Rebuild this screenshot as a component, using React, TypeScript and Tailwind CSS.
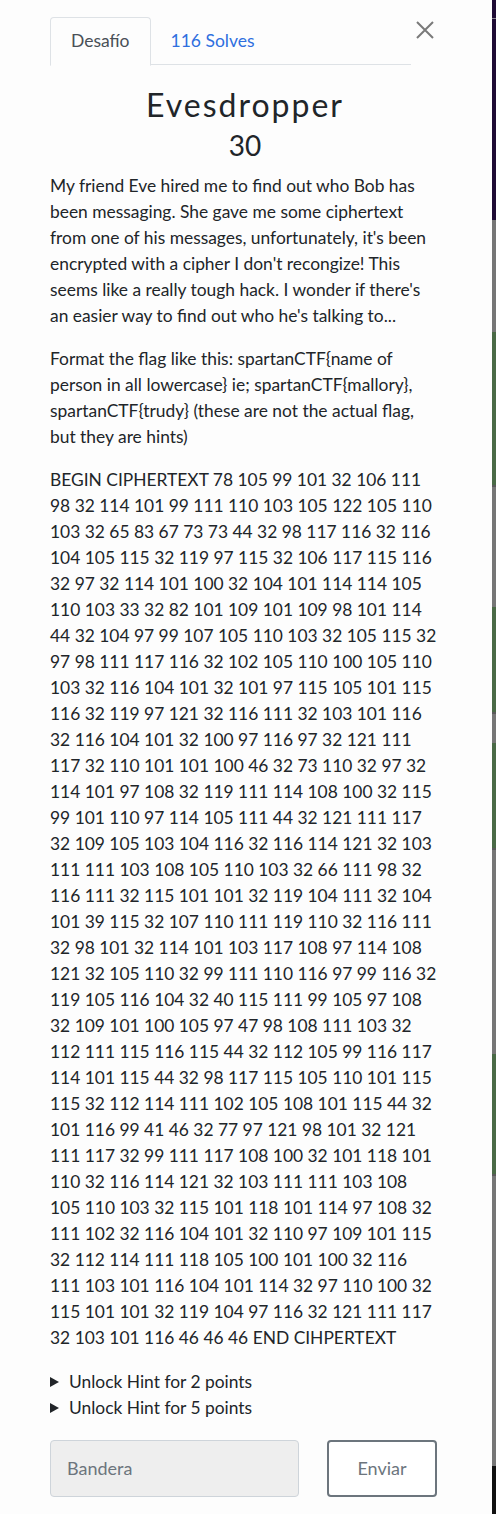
import React from "react";

const CIPHER =
  "BEGIN CIPHERTEXT 78 105 99 101 32 106 111 98 32 114 101 99 111 110 103 105 122 105 110 103 32 65 83 67 73 73 44 32 98 117 116 32 116 104 105 115 32 119 97 115 32 106 117 115 116 32 97 32 114 101 100 32 104 101 114 114 105 110 103 33 32 82 101 109 101 109 98 101 114 44 32 104 97 99 107 105 110 103 32 105 115 32 97 98 111 117 116 32 102 105 110 100 105 110 103 32 116 104 101 32 101 97 115 105 101 115 116 32 119 97 121 32 116 111 32 103 101 116 32 116 104 101 32 100 97 116 97 32 121 111 117 32 110 101 101 100 46 32 73 110 32 97 32 114 101 97 108 32 119 111 114 108 100 32 115 99 101 110 97 114 105 111 44 32 121 111 117 32 109 105 103 104 116 32 116 114 121 32 103 111 111 103 108 105 110 103 32 66 111 98 32 116 111 32 115 101 101 32 119 104 111 32 104 101 39 115 32 107 110 111 119 110 32 116 111 32 98 101 32 114 101 103 117 108 97 114 108 121 32 105 110 32 99 111 110 116 97 99 116 32 119 105 116 104 32 40 115 111 99 105 97 108 32 109 101 100 105 97 47 98 108 111 103 32 112 111 115 116 115 44 32 112 105 99 116 117 114 101 115 44 32 98 117 115 105 110 101 115 115 32 112 114 111 102 105 108 101 115 44 32 101 116 99 41 46 32 77 97 121 98 101 32 121 111 117 32 99 111 117 108 100 32 101 118 101 110 32 116 114 121 32 103 111 111 103 108 105 110 103 32 115 101 118 101 114 97 108 32 111 102 32 116 104 101 32 110 97 109 101 115 32 112 114 111 118 105 100 101 100 32 116 111 103 101 116 104 101 114 32 97 110 100 32 115 101 101 32 119 104 97 116 32 121 111 117 32 103 101 116 46 46 46 END CIHPERTEXT";

const STRIP: { h: number; c: string }[] = [
  { h: 18, c: "#1f0b35" },
  { h: 1, c: "#8a8590" },
  { h: 201, c: "#1f0b35" },
  { h: 112, c: "#767676" },
  { h: 153, c: "#4a6a46" },
  { h: 2, c: "#5a5a5a" },
  { h: 120, c: "#767676" },
  { h: 105, c: "#4a6a46" },
  { h: 2, c: "#5a5a5a" },
  { h: 29, c: "#767676" },
  { h: 105, c: "#4a6a46" },
  { h: 2, c: "#5a5a5a" },
  { h: 204, c: "#767676" },
  { h: 120, c: "#4a6a46" },
  { h: 2, c: "#5a5a5a" },
  { h: 290, c: "#767676" },
  { h: 48, c: "#111111" },
];

export default function App() {
  return (
    <div
      className="flex w-[496px] h-[1514px] overflow-hidden bg-white"
      style={{ fontFamily: "Lato, 'Open Sans', sans-serif" }}
    >
      <div className="w-[492px] bg-[#fdfdfd] pl-[50px] pt-[17px]">
        <div className="flex items-start">
          <div className="flex w-[361px] border-b border-[#dee2e6] h-[48px]">
            <div className="h-[49px] px-[20px] flex items-center border border-[#dee2e6] border-b-[#fdfdfd] rounded-t-[4px] text-[17.5px] text-[#495057] bg-[#fdfdfd]">
              Desafío
            </div>
            <div className="h-[48px] px-[20px] flex items-center text-[17.5px] text-[#2f6fdf]">
              116 Solves
            </div>
          </div>
          <button className="ml-[5px] mt-[4px] w-[18px] h-[18px] text-[#777]">
            <svg width="18" height="18" viewBox="0 0 18 18">
              <path d="M1 1 L17 17 M17 1 L1 17" stroke="#7a7a7a" strokeWidth="2" />
            </svg>
          </button>
        </div>

        <div className="w-[390px]">
          <h3 className="mt-[21px] text-center text-[32px] leading-[38px] tracking-[2px] text-[#212529]">
            Evesdropper
          </h3>
          <h4 className="mt-[4px] text-center text-[28px] leading-[34px] text-[#212529]">30</h4>

          <div className="mt-[11px] text-[17.4px] leading-[26px] text-[#212529]">
            <p className="mb-[17px]">
              My friend Eve hired me to find out who Bob has been messaging. She gave me some
              ciphertext from one of his messages, unfortunately, it's been encrypted with a cipher I
              don't recongize! This seems like a really tough hack. I wonder if there's an easier way
              to find out who he's talking to...
            </p>
            <p className="mb-[17px]">
              Format the flag like this: spartanCTF{"{"}name of person in all lowercase{"}"} ie;
              spartanCTF{"{"}mallory{"}"}, spartanCTF{"{"}trudy{"}"} (these are not the actual flag,
              but they are hints)
            </p>
            <p className="mb-[18px]">{CIPHER}</p>

            <div className="flex items-center gap-[10px]">
              <svg width="9" height="10" viewBox="0 0 9 10">
                <path d="M0 0 L9 5 L0 10 Z" fill="#212529" />
              </svg>
              <span>Unlock Hint for 2 points</span>
            </div>
            <div className="flex items-center gap-[10px]">
              <svg width="9" height="10" viewBox="0 0 9 10">
                <path d="M0 0 L9 5 L0 10 Z" fill="#212529" />
              </svg>
              <span>Unlock Hint for 5 points</span>
            </div>
          </div>

          <div className="mt-[19px] flex">
            <div className="w-[249px] h-[57px] rounded-[4px] border border-[#ced4da] bg-[#eeeeee] flex items-center pl-[16px] text-[18px] text-[#6c757d]">
              Bandera
            </div>
            <button className="ml-[28px] w-[110px] h-[57px] rounded-[4px] border-[2px] border-[#6c757d] bg-white text-[18px] text-[#6c757d]">
              Enviar
            </button>
          </div>
        </div>
      </div>
      <div className="w-[4px] flex flex-col">
        {STRIP.map((s, i) => (
          <div key={i} style={{ height: s.h, background: s.c }} />
        ))}
      </div>
    </div>
  );
}
